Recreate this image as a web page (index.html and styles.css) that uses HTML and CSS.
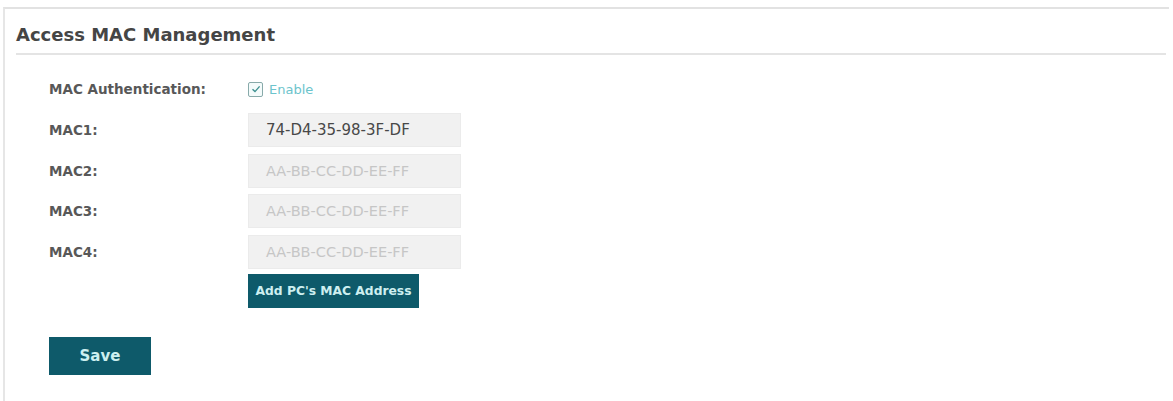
FILE: index.html
```html
<!DOCTYPE html>
<html>
<head>
<meta charset="utf-8">
<link rel="stylesheet" href="styles.css">
</head>
<body>
<div class="panel">
  <h2 class="title">Access MAC Management</h2>
  <div class="form">
    <div class="row auth">
      <div class="label">MAC Authentication:</div>
      <label class="check">
        <span class="box"><svg width="10" height="10" viewBox="0 0 10 10"><path d="M1.5 5.2 L4 7.6 L8.6 2.4" fill="none" stroke="#3d8f8f" stroke-width="1.4"/></svg></span>
        <span class="check-text">Enable</span>
      </label>
    </div>
    <div class="row">
      <div class="label">MAC1:</div>
      <div class="input filled">74-D4-35-98-3F-DF</div>
    </div>
    <div class="row">
      <div class="label">MAC2:</div>
      <div class="input">AA-BB-CC-DD-EE-FF</div>
    </div>
    <div class="row">
      <div class="label">MAC3:</div>
      <div class="input">AA-BB-CC-DD-EE-FF</div>
    </div>
    <div class="row">
      <div class="label">MAC4:</div>
      <div class="input">AA-BB-CC-DD-EE-FF</div>
    </div>
    <div class="row btnrow">
      <div class="label"></div>
      <button class="btn add">Add PC's MAC Address</button>
    </div>
  </div>
  <button class="btn save">Save</button>
</div>
</body>
</html>
```
FILE: styles.css
```css
html, body {
  margin: 0;
  padding: 0;
  background: #fff;
  font-family: "DejaVu Sans", Verdana, sans-serif;
  overflow: hidden;
}
.panel {
  margin: 7px 4px 0 3px;
  border-top: 2px solid #e2e2e2;
  border-left: 2px solid #e6e6e6;
  height: 392px;
  padding: 0 3px 0 11px;
}
.title {
  margin: 0;
  padding: 15px 0 8px 0;
  font-size: 18px;
  font-weight: bold;
  color: #454545;
  border-bottom: 2px solid #e4e4e4;
  line-height: 21px;
}
.form {
  padding: 0 0 0 33px;
  display: flex;
  flex-direction: column;
  gap: 6.5px;
}
.row {
  display: flex;
  align-items: center;
  height: 34px;
}
.row.auth {
  margin-top: 24px;
  height: 20px;
  margin-bottom: 7.5px;
}
.label {
  width: 199px;
  font-size: 13.5px;
  font-weight: bold;
  color: #585858;
}
.check {
  display: flex;
  align-items: center;
  gap: 6px;
}
.box {
  width: 13px;
  height: 13px;
  border: 1px solid #8aa;
  border-radius: 2px;
  display: flex;
  align-items: center;
  justify-content: center;
  background: #f4fbfb;
}
.check-text {
  font-size: 13px;
  color: #6cc4cc;
}
.input {
  width: 194px;
  height: 32px;
  border: 1px solid #ebebeb;
  background: #f1f1f1;
  padding-left: 17px;
  display: flex;
  align-items: center;
  font-size: 14.5px;
  color: #c6c6c6;
}
.input.filled {
  color: #484848;
  font-size: 15px;
}
.btn {
  border: none;
  background: #0e5a6a;
  color: #cdeff0;
  font-family: "DejaVu Sans", Verdana, sans-serif;
  font-weight: bold;
  padding: 0;
  cursor: pointer;
}
.btnrow {
  margin-top: -1px;
}
.add {
  width: 171px;
  height: 34px;
  font-size: 12.3px;
}
.save {
  margin: 29px 0 0 33px;
  width: 102px;
  height: 38px;
  font-size: 15px;
}
```
